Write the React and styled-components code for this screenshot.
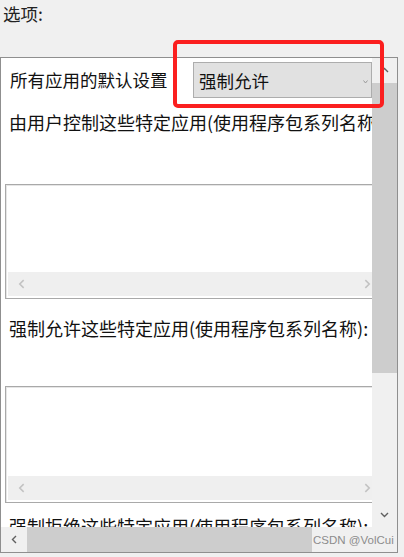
import React from 'react'
import styled, { createGlobalStyle } from 'styled-components'

const GlobalStyle = createGlobalStyle`
  html, body {
    margin: 0;
    padding: 0;
    background: #f0f0f0;
  }
  body {
    font-family: "Noto Sans CJK SC", "Noto Sans", sans-serif;
    color: #111;
  }
`

const Page = styled.div`
  position: relative;
  width: 404px;
  height: 557px;
  overflow: hidden;
  background: #f0f0f0;
`

const Caption = styled.div`
  height: 57px;
  box-sizing: border-box;
  padding: 2px 0 0 3px;
  font-size: 17.5px;
  line-height: 24px;
  color: #222;
`

const Panel = styled.div`
  display: grid;
  grid-template-columns: 371px 25px;
  grid-template-rows: 469px 25px;
  width: 398px;
  box-sizing: border-box;
  border: 1px solid #8f8f8f;
  background: #fff;
`

const Viewport = styled.div`
  overflow: hidden;
  background: #fff;
`

const Content = styled.div`
  width: 440px;
  display: flex;
  flex-direction: column;
`

const SettingRow = styled.div`
  display: flex;
  align-items: center;
  padding: 4px 0 0 9px;
  height: 36px;
`

const RowLabel = styled.span`
  width: 183px;
  font-size: 17.5px;
  line-height: 24px;
  white-space: nowrap;
`

const Select = styled.div`
  position: relative;
  width: 179px;
  height: 36px;
  box-sizing: border-box;
  border: 1px solid #adadad;
  background: #e1e1e1;
  padding-left: 5px;
  display: flex;
  align-items: center;
  font-size: 17.5px;
  svg {
    position: absolute;
    right: 3px;
    top: 17px;
  }
`

const SectionLabel = styled.div`
  margin-top: ${p => p.$gap}px;
  padding-left: 8px;
  font-size: 18px;
  line-height: 24px;
  white-space: nowrap;
`

const ListBox = styled.div`
  margin: ${p => p.$gap}px 0 0 4px;
  width: 372px;
  height: ${p => p.$h}px;
  box-sizing: border-box;
  border: 1px solid #a9a9a9;
  box-shadow: inset 1px 1px 0 #e6e6e6;
  padding: 2px;
  display: flex;
  flex-direction: column;
  justify-content: flex-end;
  background: #fff;
`

const InnerHScroll = styled.div`
  height: 24px;
  background: #efefef;
  display: flex;
  align-items: center;
  justify-content: space-between;
  padding: 0 2px 0 9px;
`

const VScroll = styled.div`
  display: flex;
  flex-direction: column;
  background: #f0f0f0;
`

const ArrowBox = styled.div`
  flex: 0 0 ${p => p.$size || 25}px;
  display: flex;
  align-items: center;
  justify-content: center;
`

const VThumb = styled.div`
  height: 290px;
  background: #cdcdcd;
`

const Track = styled.div`
  flex: 1;
`

const HScroll = styled.div`
  display: flex;
  background: #f0f0f0;
`

const HThumb = styled.div`
  width: 285px;
  background: #cdcdcd;
`

const Corner = styled.div`
  background: #f0f0f0;
`

const Highlight = styled.div`
  position: absolute;
  left: 173px;
  top: 40px;
  width: 211px;
  height: 68px;
  box-sizing: border-box;
  border: 4px solid #fb1f1f;
  border-radius: 5px;
  pointer-events: none;
`

const Watermark = styled.div`
  position: absolute;
  left: 313px;
  top: 532px;
  font-family: "Liberation Sans", Arial, sans-serif;
  font-size: 11.5px;
  line-height: 16px;
  color: #8c8c8c;
`

const Chevron = ({ dir, color = '#606060', size = 9 }) => {
  const pts = {
    up: '1,6 4.5,2.5 8,6',
    down: '1,3 4.5,6.5 8,3',
    left: '6,1 2.5,4.5 6,8',
    right: '3,1 6.5,4.5 3,8',
  }[dir]
  return (
    <svg width={size} height={size} viewBox="0 0 9 9">
      <polyline points={pts} fill="none" stroke={color} strokeWidth="1.4" />
    </svg>
  )
}

const List = ({ gap, h }) => (
  <ListBox $gap={gap} $h={h}>
    <InnerHScroll>
      <Chevron dir="left" color="#c2c2c2" size={10} />
      <Chevron dir="right" color="#c2c2c2" size={10} />
    </InnerHScroll>
  </ListBox>
)

export default function App() {
  return (
    <Page>
      <GlobalStyle />
      <Caption>选项:</Caption>
      <Panel>
        <Viewport>
          <Content>
            <SettingRow>
              <RowLabel>所有应用的默认设置</RowLabel>
              <Select>
                强制允许
                <svg width="5" height="4" viewBox="0 0 5 4">
                  <polyline points="0.5,0.5 2.5,3 4.5,0.5" fill="none" stroke="#9a9a9a" strokeWidth="1" />
                </svg>
              </Select>
            </SettingRow>
            <SectionLabel $gap={12}>由用户控制这些特定应用(使用程序包系列名称):</SectionLabel>
            <List gap={50} h={115} />
            <SectionLabel $gap={17}>强制允许这些特定应用(使用程序包系列名称):</SectionLabel>
            <List gap={46} h={117} />
            <SectionLabel $gap={11}>强制拒绝这些特定应用(使用程序包系列名称):</SectionLabel>
          </Content>
        </Viewport>
        <VScroll>
          <ArrowBox>
            <Chevron dir="up" />
          </ArrowBox>
          <VThumb />
          <Track />
          <ArrowBox>
            <Chevron dir="down" />
          </ArrowBox>
        </VScroll>
        <HScroll>
          <ArrowBox $size={26}>
            <Chevron dir="left" />
          </ArrowBox>
          <HThumb />
          <Track />
        </HScroll>
        <Corner />
      </Panel>
      <Highlight />
      <Watermark>CSDN @VolCui</Watermark>
    </Page>
  )
}
